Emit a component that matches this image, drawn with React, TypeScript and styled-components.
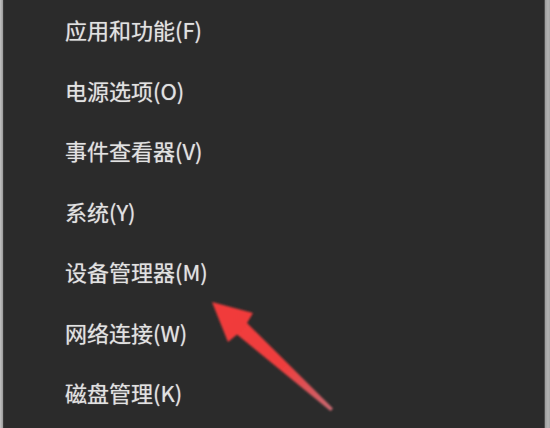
import styled, {createGlobalStyle} from "styled-components";

const GlobalStyle = createGlobalStyle`
  html, body {
    margin: 0;
    padding: 0;
    background: #2b2b2b;
  }
  body {
    font-family: "Noto Sans CJK SC", "Noto Sans", sans-serif;
  }
`;

const items = [
    '应用和功能(F)',
    '电源选项(O)',
    '事件查看器(V)',
    '系统(Y)',
    '设备管理器(M)',
    '网络连接(W)',
    '磁盘管理(K)',
];

const Frame = styled.div`
  position: relative;
  width: 550px;
  height: 428px;
  display: flex;
  background: #2b2b2b;
  overflow: hidden;
`;

const LeftEdge = styled.div`
  width: 3px;
  background: linear-gradient(to right, #c4c4c4, #9a9a9a);
  border-right: 1px solid #3a3a3a;
`;

const RightEdge = styled.div`
  width: 5px;
  background: linear-gradient(to right, #9c9c9c, #b4b4b4 60%, #a4a4a4);
  border-left: 1px solid #4e4e4e;
`;

const Menu = styled.ul`
  flex: 1;
  margin: 0;
  padding: 0 0 0 61px;
  list-style: none;
  display: flex;
  flex-direction: column;
`;

const MenuItem = styled.li`
  height: 60.5px;
  display: flex;
  align-items: center;
  font-size: 22px;
  color: #e2e2e2;
  text-shadow: 0 0 1px rgba(230, 230, 230, 0.6);
  white-space: nowrap;
  margin-top: -1px;
  margin-bottom: 1px;
`;

const ArrowSvg = styled.svg`
  position: absolute;
  left: 0;
  top: 0;
  pointer-events: none;
`;

// red callout arrow pointing at the device manager entry
const Arrow = () => (
    <ArrowSvg width={550} height={428} viewBox="0 0 550 428">
        <defs>
            <linearGradient id="arrowFill" x1="212" y1="302" x2="332" y2="410" gradientUnits="userSpaceOnUse">
                <stop offset="0" stopColor="#f23a3a"/>
                <stop offset="0.6" stopColor="#ee3e3e"/>
                <stop offset="1" stopColor="#c86a72"/>
            </linearGradient>
            <filter id="soft" x="-10%" y="-10%" width="120%" height="120%">
                <feGaussianBlur stdDeviation="0.8"/>
            </filter>
        </defs>
        <polygon
            points="212,302 253,313 247,323 333,408.5 330.5,411 237,334.5 228,342"
            fill="url(#arrowFill)"
            filter="url(#soft)"
        />
    </ArrowSvg>
);

export default function App() {
    return (
        <>
            <GlobalStyle/>
            <Frame>
                <LeftEdge/>
                <Menu>
                    {items.map(item => (
                        <MenuItem key={item}>{item}</MenuItem>
                    ))}
                </Menu>
                <RightEdge/>
                <Arrow/>
            </Frame>
        </>
    );
}
